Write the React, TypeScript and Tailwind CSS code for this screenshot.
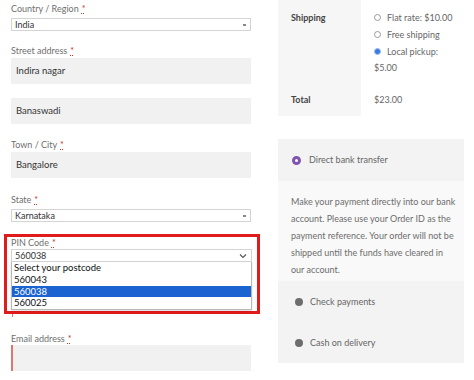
import React from "react";

const font = { fontFamily: "Lato, 'Open Sans', sans-serif" };

function Label({ text, className = "" }: { text: string; className?: string }) {
  return (
    <div className={"flex items-center text-[9px] text-[#6f6f6f] leading-none " + className}>
      <span>{text}</span>
      <span className="ml-[3px] text-[#c0392b] underline decoration-dotted">*</span>
    </div>
  );
}

function SelectBox({ value, chevron = false }: { value: string; chevron?: boolean }) {
  return (
    <div className="h-[13px] border border-[#d4d4d4] bg-white flex items-center justify-between pl-[3px] pr-[4px] text-[9px] text-[#333] leading-none">
      <span>{value}</span>
      {chevron ? (
        <svg width="8" height="6" viewBox="0 0 8 6" className="text-[#555]">
          <path d="M1 1.5 L4 4.5 L7 1.5" fill="none" stroke="currentColor" strokeWidth="1.1" />
        </svg>
      ) : (
        <span className="w-[3px] h-[2px] bg-[#888]" />
      )}
    </div>
  );
}

function Input({ value, invalid = false }: { value?: string; invalid?: boolean }) {
  return (
    <div
      className={
        "h-[26px] bg-[#f1f1f1] flex items-center pl-[5px] text-[9.5px] text-[#333] " +
        (invalid ? "border-l-2 border-[#e2766a]" : "")
      }
    >
      {value}
    </div>
  );
}

function SmallRadio({ checked = false }: { checked?: boolean }) {
  return checked ? (
    <span className="w-[7px] h-[7px] rounded-full bg-[#3b7be0] border border-[#9bbcf0] inline-block" />
  ) : (
    <span className="w-[7px] h-[7px] rounded-full border border-[#9a9a9a] bg-white inline-block" />
  );
}

export default function App() {
  return (
    <div className="w-[474px] h-[380px] bg-white overflow-hidden flex" style={font}>
      {/* Left column */}
      <div className="w-[240px] ml-[11px] flex flex-col">
        <Label text="Country / Region" className="h-[16px]" />
        <div className="mt-[2px]">
          <SelectBox value="India" />
        </div>
        <Label text="Street address" className="h-[16px] mt-[11px]" />
        <Input value="Indira nagar" />
        <div className="mt-[14px]">
          <Input value="Banaswadi" />
        </div>
        <Label text="Town / City" className="h-[16px] mt-[12px]" />
        <Input value="Bangalore" />
        <Label text="State" className="h-[16px] mt-[13px]" />
        <div className="mt-[2px]">
          <SelectBox value="Karnataka" />
        </div>
        {/* Highlighted PIN code field */}
        <div className="mt-[12px] -ml-[7px] w-[256px] border-[3px] border-[#e01b1b] pl-[4px] pr-[5px] pb-[1px]">
          <Label text="PIN Code" className="h-[12px] pb-[2px]" />
          <SelectBox value="560038" chevron />
          <div className="border border-t-0 border-[#b8b8b8] bg-white text-[9.5px] text-[#111] leading-none shadow-[0_1px_2px_rgba(0,0,0,0.15)]">
            <div className="h-[12px] pl-[2px] flex items-center">Select your postcode</div>
            <div className="h-[12px] pl-[2px] flex items-center">560043</div>
            <div className="h-[11px] pl-[2px] flex items-center bg-[#1a63d0] text-white">560038</div>
            <div className="h-[12px] pl-[2px] flex items-center">560025</div>
          </div>
        </div>
        <div className="w-[1px] h-[3px] bg-[#e2766a] ml-[1px]" />
        <Label text="Email address" className="h-[16px] mt-[13px]" />
        <div className="mt-[-1px]">
          <Input invalid />
        </div>
      </div>

      {/* Right column */}
      <div className="ml-[27px] w-[186px] flex flex-col">
        {/* Order table */}
        <div className="flex h-[116px]">
          <div className="w-[83px] bg-[#f6f6f6] pl-[13px] text-[9px] font-bold text-[#444] flex flex-col">
            <div className="h-[17px] mt-[9px] flex items-center">Shipping</div>
            <div className="h-[17px] mt-[65px] flex items-center">Total</div>
          </div>
          <div className="flex-1 pl-[13px] text-[9px] text-[#666] flex flex-col">
            <div className="mt-[9px] h-[17px] flex items-center gap-[6px]">
              <SmallRadio />
              <span>Flat rate: $10.00</span>
            </div>
            <div className="h-[17px] flex items-center gap-[6px]">
              <SmallRadio />
              <span>Free shipping</span>
            </div>
            <div className="h-[17px] flex items-center gap-[6px]">
              <SmallRadio checked />
              <span>Local pickup:</span>
            </div>
            <div className="h-[15px] flex items-center">$5.00</div>
            <div className="h-[17px] mt-[16px] flex items-center">$23.00</div>
          </div>
        </div>

        {/* Payment methods */}
        <div className="mt-[23px] bg-[#f3f3f3] h-[224px] flex flex-col text-[9px] text-[#666]">
          <div className="h-[42px] flex items-center pl-[14px] gap-[8px]">
            <span className="w-[9px] h-[9px] rounded-full border-[3px] border-[#7f54b3] bg-white inline-block" />
            <span>Direct bank transfer</span>
          </div>
          <div className="bg-[#f9f9f9] h-[100px] pl-[13px] pr-[4px] pt-[12px] leading-[17px] text-[#6d6d6d] flex flex-col">
            <span>Make your payment directly into our bank</span>
            <span>account. Please use your Order ID as the</span>
            <span>payment reference. Your order will not be</span>
            <span>shipped until the funds have cleared in</span>
            <span>our account.</span>
          </div>
          <div className="h-[42px] flex items-center pl-[17px] gap-[7px]">
            <span className="w-[8px] h-[8px] rounded-full bg-[#6d6d6d] inline-block" />
            <span>Check payments</span>
          </div>
          <div className="h-[40px] flex items-center pl-[17px] gap-[7px]">
            <span className="w-[8px] h-[8px] rounded-full bg-[#6d6d6d] inline-block" />
            <span>Cash on delivery</span>
          </div>
        </div>
      </div>
    </div>
  );
}
